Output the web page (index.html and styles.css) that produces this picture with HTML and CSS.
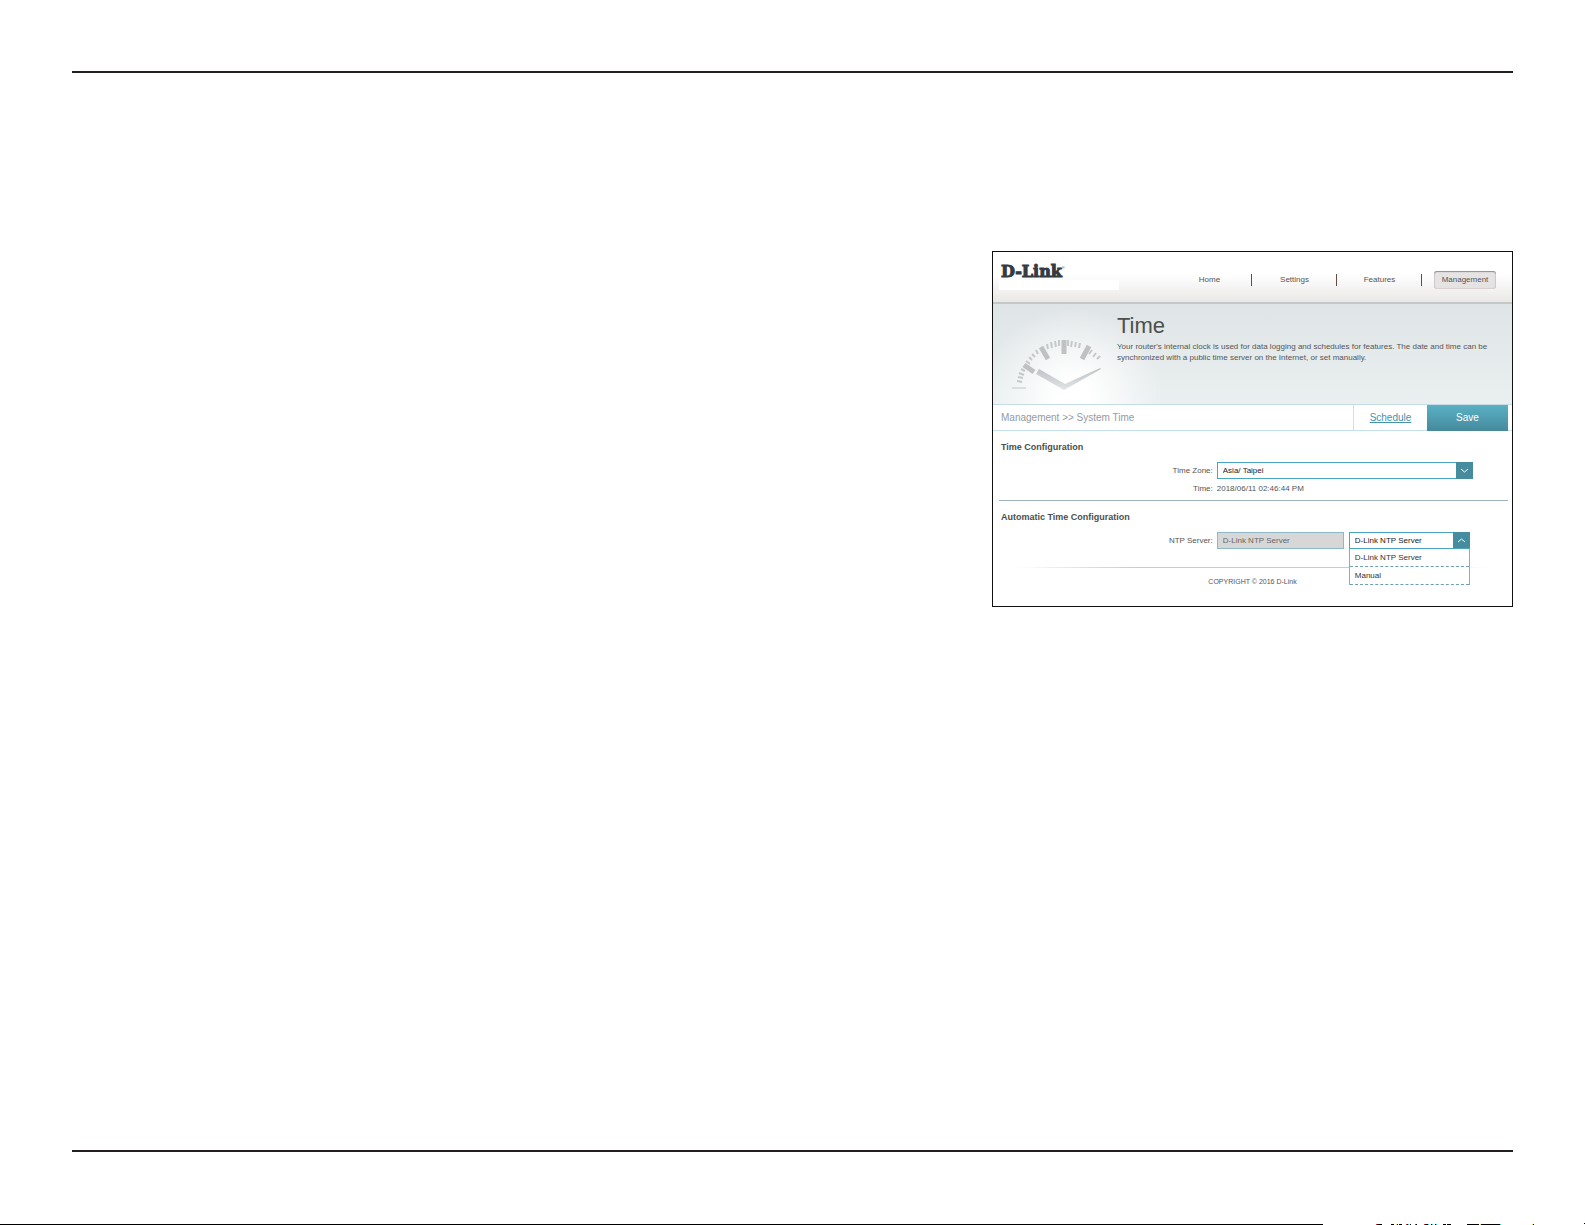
FILE: index.html
```html
<!DOCTYPE html>
<html lang="en">
    <head>
        <meta charset="utf-8">
        <title>System Time</title>
        <link rel="stylesheet" href="styles.css">
    </head>

    <body>
        <div class="page">
            <hr class="rule">

            <div class="content">
                <div class="router">
                    <header class="top">
                        <div class="brand">
                            <div class="logo">D-Link<sup>®</sup></div>
                            <div class="model"></div>
                        </div>
                        <nav class="nav">
                            <a href="#">Home</a>
                            <a href="#">Settings</a>
                            <a href="#">Features</a>
                            <a href="#" class="active">Management</a>
                        </nav>
                    </header>

                    <div class="hero">
                        <svg class="clock" viewBox="0 0 100 60">
                            <defs>
                                <linearGradient id="fade" x1="0" y1="0" x2="0" y2="60" gradientUnits="userSpaceOnUse">
                                    <stop offset="0.6" stop-color="#bfc2c4"/>
                                    <stop offset="1" stop-color="#e4e8e9"/>
                                </linearGradient>
                            </defs>
                            <!-- minute ticks -->
                            <path d="M7 49L12 50M8 45L13 46M9 41L14 43M11 37L15 39M16 29L20 32M19 25L22 28M22 22L25 25M26 18L28 22M37 12L38 17M41 10L42 16M45 9L46 15M49 8L49 14M58 8L58 14M62 9L61 15M66 10L65 15M70 11L69 16M79 16L76 20M82 18L79 22M86 21L83 25M90 24L87 27" stroke="#c6c9cb" stroke-width="2"/>
                            <!-- hour ticks -->
                            <path d="M14 33L24 40M31 15L38 27M54 8L54 22M79 14L72 27" stroke="#bfc1c3" stroke-width="5"/>
                            <path d="M2 56H16" stroke="#d9dedf" stroke-width="2"/>
                            <!-- hands -->
                            <path d="M29 37L26 42L54 58L91 37L90 36L55 52Z" fill="url(#fade)"/>
                        </svg>
                        <div class="intro">
                            <h1>Time</h1>
                            <p>Your router's internal clock is used for data logging and schedules for features. The date and time can be synchronized with a public time server on the Internet, or set manually.</p>
                        </div>
                    </div>

                    <div class="bar">
                        <span class="crumbs">Management &gt;&gt; System Time</span>
                        <a href="#" class="schedule">Schedule</a>
                        <button type="button" class="save">Save</button>
                    </div>

                    <form class="settings">
                        <section class="group">
                            <h2>Time Configuration</h2>
                            <div class="row">
                                <label for="zone">Time Zone:</label>
                                <div class="dropdown zone">
                                    <select id="zone">
                                        <option>Asia/ Taipei</option>
                                    </select>
                                    <svg class="arrow" viewBox="0 0 17 17"><path d="M5 7L8.500 10L12 7"/></svg>
                                </div>
                            </div>
                            <div class="row">
                                <label for="now">Time:</label>
                                <output id="now">2018/06/11 02:46:44 PM</output>
                            </div>
                        </section>

                        <section class="group">
                            <h2>Automatic Time Configuration</h2>
                            <div class="row">
                                <label for="ntp">NTP Server:</label>
                                <input id="ntp" class="ntp" type="text" value="D-Link NTP Server" disabled>
                                <div class="dropdown server">
                                    <select id="server" aria-label="NTP Server source">
                                        <option>D-Link NTP Server</option>
                                        <option>Manual</option>
                                    </select>
                                    <svg class="arrow" viewBox="0 0 17 17"><path d="M5 10L8.500 7L12 10"/></svg>
                                    <ul class="menu">
                                        <li>D-Link NTP Server</li>
                                        <li>Manual</li>
                                    </ul>
                                </div>
                            </div>
                        </section>
                    </form>

                    <footer class="copyright">COPYRIGHT © 2016 D-Link</footer>
                </div>
            </div>

            <hr class="rule">
        </div>

        <div class="edge">
            <div class="edge-line"></div>
            <svg width="262" height="2" viewBox="0 0 262 2" shape-rendering="crispEdges">
                <path d="M53 1.500h6M68 1.500h3M73 1.500h2M76 1.500h3M83 1.500h3M87 1.500h1M92 1.500h2M101 1.500h5M108 1.500h2M112 1.500h2M120 1.500h3M124 1.500h4M144 1.500h12M157 1.500h21M210 1.500h1M261 0.500h1" stroke="#000"/>
                <path d="M53 1.500h1M83 1.500h1M92 1.500h1M101 1.500h1" stroke="#e02020"/>
                <path d="M85 1.500h1M105 1.500h1M109 1.500h1M113 1.500h1M177 1.500h1" stroke="#20e0e0"/>
                <path d="M73 1.500h1M157 1.500h1M209 1.500h1" stroke="#f0e020"/>
            </svg>
        </div>
    </body>
</html>
```

FILE: styles.css
```css
*{
    box-sizing: border-box;
}

body{
    display: flex;
    flex-direction: column;
    min-height: 100vh;
    margin: 0;
    background: #fff;
    color: #555;
    font-family: "Liberation Sans", Arial, sans-serif;
    font-size: 8px;
    line-height: 11px;
}

h1, h2, p, ul{
    margin: 0;
    padding: 0;
    list-style: none;
}

a{
    color: inherit;
    text-decoration: none;
}

.page{
    display: flex;
    flex-direction: column;
    flex: 1;
    padding: 71px 72px;
}

.rule{
    width: 100%;
    height: 2px;
    margin: 0;
    border: 0;
    background: #231f20;
}

.content{
    display: grid;
    grid-template-columns: 920fr 521fr;
    align-items: start;
    flex: 1;
    padding-top: 178px;
}

.router{
    grid-column: 2;
    border: 1px solid #111;
}

/* header */

.top{
    display: flex;
    justify-content: space-between;
    height: 52px;
    padding: 10px 16px 0 6px;
    border-bottom: 2px solid #c3c7c8;
    background: linear-gradient(#fff 45%, #eae8e7);
}

.logo{
    padding: 1px 0 0 2px;
    color: #333a40;
    font: bold 16px/17px "DejaVu Serif", serif;
    -webkit-text-stroke: 1px #333a40;
}

.logo sup{
    font: 4px/4px "Liberation Sans", sans-serif;
    vertical-align: 8px;
    -webkit-text-stroke: 0;
}

.model{
    width: 120px;
    height: 10px;
    background: #fff;
}

.nav{
    display: flex;
    align-items: flex-start;
    padding-top: 9px;
}

.nav a{
    position: relative;
    width: 85px;
    line-height: 18px;
    text-align: center;
}

.nav a::after{
    position: absolute;
    top: 3px;
    right: 0;
    width: 1px;
    height: 12px;
    background: #6b4a45;
    content: "";
}

.nav a.active{
    width: 62px;
    margin-left: 12px;
    border-radius: 3px;
    background: #e6e3e3;
    box-shadow: inset 0 1px 1px #8b9196, inset 0 0 1px 1px #d5cfce;
}

.nav a.active::after{
    display: none;
}

/* title area */

.hero{
    display: flex;
    height: 101px;
    border-bottom: 1px solid #c5dbe6;
    background: radial-gradient(circle at 80px 92px, #fff 15px, transparent 90px), linear-gradient(#dfe4e6, #eaeff0);
}

.clock{
    flex: none;
    width: 100px;
    height: 60px;
    margin: 28px 7px 0 17px;
}

.intro{
    padding-top: 9px;
}

h1{
    color: #4d5049;
    font-size: 22px;
    font-weight: normal;
    line-height: 25px;
}

.intro p{
    padding: 3px 6px 0 0;
}

/* breadcrumbs and actions */

.bar{
    display: flex;
    height: 26px;
    padding-right: 4px;
    border-bottom: 1px solid #c5e0ee;
    font-size: 10px;
    line-height: 26px;
}

.crumbs{
    flex: 1;
    padding-left: 8px;
    color: #949b9f;
}

.schedule{
    width: 74px;
    border-left: 1px solid #d5dde2;
    color: #4594a9;
    text-align: center;
    text-decoration: underline;
}

.save{
    width: 81px;
    height: 26px;
    padding: 0;
    border: 0;
    background: linear-gradient(#5ab0c4, #468a9c);
    color: #fff;
    font: inherit;
}

/* settings */

.settings{
    padding: 0 4px 0 6px;
}

.group{
    padding-bottom: 3px;
}

.group + .group{
    border-top: 1px solid #9fb2bd;
}

h2{
    padding: 10px 2px 9px;
    color: #4a4f4a;
    font-size: 9px;
    line-height: 12px;
}

.row{
    display: flex;
    line-height: 17px;
}

.row + .row{
    padding-top: 1px;
}

.row label{
    width: 42%;
    text-align: right;
}

.row > :nth-child(2){
    margin-left: 4px;
}

.dropdown{
    position: relative;
    display: flex;
    height: 17px;
    border: 1px solid #4aa6c0;
    background: #fff;
}

.dropdown select{
    flex: 1;
    min-width: 0;
    padding: 0 5px;
    border: 0;
    background: none;
    color: #222;
    font: inherit;
    line-height: 15px;
    appearance: none;
}

.zone{
    width: 256px;
}

.server{
    width: 121px;
    margin-left: 5px;
}

.arrow{
    width: 17px;
    height: 17px;
    margin: -1px -1px -1px 0;
    background: #468c9f;
    fill: none;
    stroke: #fff;
}

.ntp{
    width: 127px;
    height: 17px;
    padding: 0 5px;
    border: 1px solid #8cb8c8;
    background: #d7d7d7;
    color: #666;
    font: inherit;
}

.menu{
    position: absolute;
    top: 15px;
    right: -1px;
    left: -1px;
    border: 1px solid #7fb2c2;
    border-top-color: #4aa6c0;
    border-bottom: 0;
    background: #fff;
    color: #333;
}

.menu li{
    height: 18px;
    padding-left: 5px;
    border-bottom: 1px dashed #6f9fae;
}

.copyright{
    height: 39px;
    margin: 15px 22px 0;
    padding-top: 9px;
    background: linear-gradient(90deg, #fff, #d9c6c3 25%, #d9c6c3 75%, #fff) top / 100% 1px no-repeat;
    font-size: 7px;
    text-align: center;
}

/* strip along the foot of the page */

.edge{
    display: flex;
    align-items: flex-end;
    height: 2px;
}

.edge-line{
    flex: 1;
    height: 1px;
    background: #000;
}
```
